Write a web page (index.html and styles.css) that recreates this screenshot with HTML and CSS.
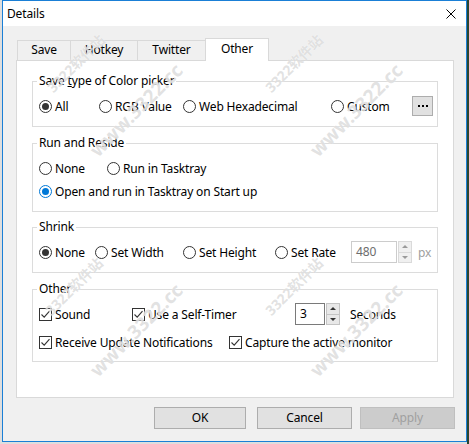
FILE: index.html
```html
<!DOCTYPE html>
<html>
<head>
<meta charset="utf-8">
<title>Details</title>
<link rel="stylesheet" href="styles.css">
</head>
<body>
<div class="window">
  <div class="titlebar">
    <span class="title">Details</span>
    <svg class="close" width="10" height="10" viewBox="0 0 10 10"><path d="M0.5 0.5 L9.5 9.5 M9.5 0.5 L0.5 9.5" stroke="#000" stroke-width="1" fill="none"/></svg>
  </div>
  <div class="client">
    <div class="tabs">
      <div class="tab t-save">Save</div>
      <div class="tab t-hotkey">Hotkey</div>
      <div class="tab t-twitter">Twitter</div>
      <div class="tab active t-other">Other</div>
    </div>
    <div class="panel">
      <fieldset class="group g1">
        <legend>Save <u>t</u>ype of Color picker</legend>
        <div class="row">
          <span class="opt w-all"><i class="radio on"></i>All</span>
          <span class="opt w-rgb"><i class="radio"></i>RGB Value</span>
          <span class="opt w-web"><i class="radio"></i>Web Hexadecimal</span>
          <span class="opt w-custom"><i class="radio"></i>Custom</span>
          <span class="dots"><b></b><b></b><b></b></span>
        </div>
      </fieldset>

      <fieldset class="group g2">
        <legend>Run and Reside</legend>
        <div class="row">
          <span class="opt w-none1"><i class="radio"></i>None</span>
          <span class="opt"><i class="radio"></i>Run in Tasktray</span>
        </div>
        <div class="row row-gap3">
          <span class="opt"><i class="radio on focus"></i>Open and run in Tasktray on Start up</span>
        </div>
      </fieldset>

      <fieldset class="group g3">
        <legend>Shrink</legend>
        <div class="row">
          <span class="opt w-none2"><i class="radio on"></i>None</span>
          <span class="opt w-width"><i class="radio"></i>Set Width</span>
          <span class="opt w-height"><i class="radio"></i>Set Height</span>
          <span class="opt w-rate"><i class="radio"></i>Set Rate</span>
          <span class="spin disabled">
            <span class="field f-rate">480</span>
            <span class="arrows"><span class="up"></span><span class="down"></span></span>
          </span>
          <span class="unit">px</span>
        </div>
      </fieldset>

      <fieldset class="group g4">
        <legend>Other</legend>
        <div class="row">
          <span class="opt w-sound"><i class="check"><svg width="11" height="11" viewBox="0 0 11 11"><path d="M1.5 5.5 L4.2 8.2 L9.5 2.2" stroke="#333" stroke-width="1.1" fill="none"/></svg></i>Sound</span>
          <span class="opt w-timer"><i class="check"><svg width="11" height="11" viewBox="0 0 11 11"><path d="M1.5 5.5 L4.2 8.2 L9.5 2.2" stroke="#333" stroke-width="1.1" fill="none"/></svg></i>Use a Self-Timer</span>
          <span class="spin">
            <span class="field f-sec">3</span>
            <span class="arrows"><span class="up"></span><span class="down"></span></span>
          </span>
          <span class="seconds">Seconds</span>
        </div>
        <div class="row row-gap8">
          <span class="opt w-receive"><i class="check"><svg width="11" height="11" viewBox="0 0 11 11"><path d="M1.5 5.5 L4.2 8.2 L9.5 2.2" stroke="#333" stroke-width="1.1" fill="none"/></svg></i>Receive Update Notifications</span>
          <span class="opt"><i class="check"><svg width="11" height="11" viewBox="0 0 11 11"><path d="M1.5 5.5 L4.2 8.2 L9.5 2.2" stroke="#333" stroke-width="1.1" fill="none"/></svg></i>Capture the active monitor</span>
        </div>
      </fieldset>
    </div>
    <div class="buttons">
      <span class="btn b-ok">OK</span>
      <span class="btn b-cancel">Cancel</span>
      <span class="btn b-apply disabled">Apply</span>
    </div>
  </div>

  <span class="wm wm-a1">3322软件站</span>
  <span class="wm wm-big wm-a2">www.3322.cc</span>
  <span class="wm wm-b1">3322软件站</span>
  <span class="wm wm-big wm-b2">www.3322.cc</span>
  <span class="wm wm-c1">3322软件站</span>
  <span class="wm wm-big wm-c2">www.3322.cc</span>
  <span class="wm wm-d1">3322软件站</span>
  <span class="wm wm-big wm-d2">www.3322.cc</span>
</div>
</body>
</html>
```
FILE: styles.css
```css
* { box-sizing: border-box; }
html, body { margin: 0; padding: 0; }
body {
  width: 469px;
  height: 444px;
  overflow: hidden;
  background: linear-gradient(to right, #dedede 467px, #2a4530 467px);
  font-family: "Noto Sans", "Liberation Sans", sans-serif;
  font-size: 12px;
  letter-spacing: -0.15px;
  color: #000;
}
.window {
  position: relative;
  margin-left: 2px;
  width: 465px;
  height: 442px;
  border: 1px solid #1a7fd6;
  background: #f0f0f0;
  overflow: hidden;
}
.titlebar {
  height: 25px;
  background: #fff;
  display: flex;
  align-items: center;
  justify-content: space-between;
  padding: 0 10px 0 4px;
}
.title { line-height: 16px; }
.close { display: block; }

.client { padding-top: 12px; }

.tabs {
  display: flex;
  align-items: flex-end;
  height: 22px;
  margin-left: 14px;
}
.tab {
  height: 20px;
  border: 1px solid #d9d9d9;
  border-bottom: none;
  background: #f0f0f0;
  text-align: center;
  line-height: 18px;
  margin-left: -1px;
}
.tab:first-child { margin-left: 0; }
.t-save { width: 54px; }
.t-hotkey { width: 68px; }
.t-twitter { width: 69px; }
.t-other { width: 64px; }
.tab.active {
  height: 23px;
  margin-bottom: -1px;
  background: #fff;
  position: relative;
  z-index: 1;
  line-height: 19px;
}

.panel {
  margin-left: 13px;
  width: 438px;
  height: 338px;
  border: 1px solid #d9d9d9;
  background: #fff;
  padding: 12px 15px 0;
}

.group {
  border: 1px solid #dcdcdc;
  margin: 0;
  padding: 0 0 10px;
  min-width: 0;
}
.group legend {
  margin-left: 4px;
  padding: 0 2px;
  line-height: 16px;
  height: 16px;
}
.g1 { padding-top: 7px; padding-bottom: 10px; }
.g2 { margin-top: 8px; padding-top: 7px; padding-bottom: 10px; }
.g3 { margin-top: 7px; padding-top: 7px; padding-bottom: 10px; }
.g4 { margin-top: 8px; padding-top: 7px; padding-bottom: 9px; }

.row {
  display: flex;
  align-items: center;
  height: 20px;
  padding-left: 6px;
  white-space: nowrap;
}
.row-gap3 { margin-top: 3px; }
.row-gap8 { margin-top: 8px; }

.opt {
  display: flex;
  align-items: center;
  flex: none;
}
.w-all { width: 60px; }
.w-rgb { width: 84px; }
.w-web { width: 148px; }
.w-custom { width: 81px; }
.w-none1 { width: 68px; }
.w-none2 { width: 56px; }
.w-width { width: 88px; }
.w-height { width: 92px; }
.w-rate { width: 76px; }
.w-sound { width: 93px; }
.w-timer { width: 163px; }
.w-receive { width: 190px; }

.radio {
  width: 13px;
  height: 13px;
  border: 1px solid #333;
  border-radius: 50%;
  margin-right: 3px;
  flex: none;
  display: flex;
  align-items: center;
  justify-content: center;
  background: #fff;
}
.radio.on::after {
  content: "";
  width: 7px;
  height: 7px;
  border-radius: 50%;
  background: #333;
}
.radio.focus { border-color: #0078d7; }
.radio.focus::after { background: #0078d7; }

.check {
  width: 13px;
  height: 13px;
  border: 1px solid #333;
  margin-right: 3px;
  flex: none;
  background: #fff;
}
.check svg { display: block; }

.dots {
  width: 21px;
  height: 20px;
  border: 1px solid #adadad;
  background: #e1e1e1;
  display: flex;
  align-items: center;
  justify-content: center;
  gap: 2px;
  flex: none;
}
.dots b {
  width: 2px;
  height: 2px;
  background: #000;
}

.spin {
  display: flex;
  align-items: center;
  flex: none;
  height: 22px;
}
.field {
  height: 22px;
  border: 1px solid #7a7a7a;
  background: #fff;
  padding-left: 4px;
  line-height: 20px;
}
.f-rate { width: 46px; }
.f-sec { width: 30px; }
.arrows {
  display: flex;
  flex-direction: column;
  margin-left: 1px;
  width: 14px;
  height: 22px;
}
.arrows span {
  flex: 1;
  border: 1px solid #c4c4c4;
  background: #e8e8e8;
  display: flex;
  align-items: center;
  justify-content: center;
}
.arrows span + span { border-top: none; }
.arrows .up::after {
  content: "";
  border-left: 3px solid transparent;
  border-right: 3px solid transparent;
  border-bottom: 3px solid #333;
}
.arrows .down::after {
  content: "";
  border-left: 3px solid transparent;
  border-right: 3px solid transparent;
  border-top: 3px solid #333;
}
.spin.disabled .field { border-color: #cccccc; color: #6d6d6d; }
.spin.disabled .arrows span { border-color: #dadada; background: #f0f0f0; }
.spin.disabled .arrows .up::after { border-bottom-color: #9a9a9a; }
.spin.disabled .arrows .down::after { border-top-color: #9a9a9a; }
.unit { margin-left: 6px; color: #a0a0a0; }
.seconds { margin-left: 10px; }

.buttons {
  display: flex;
  margin-top: 9px;
  padding-left: 151px;
}
.btn {
  height: 22px;
  border: 1px solid #adadad;
  background: #e1e1e1;
  text-align: center;
  line-height: 20px;
}
.b-ok { width: 92px; }
.b-cancel { width: 95px; margin-left: 11px; }
.b-apply { width: 95px; margin-left: 8px; }
.btn.disabled { background: #cccccc; border-color: #bfbfbf; color: #a0a0a0; }

.wm {
  position: absolute;
  z-index: 5;
  white-space: nowrap;
  font-family: "Noto Sans", "Noto Sans CJK SC", sans-serif;
  font-weight: bold;
  font-size: 14px;
  letter-spacing: 0;
  line-height: 20px;
  color: rgba(190, 190, 190, 0.45);
  text-shadow: 0 0 1px rgba(255, 255, 255, 0.9);
  transform: rotate(-45deg);
  transform-origin: 0 100%;
  pointer-events: none;
}
.wm-big { font-size: 19px; }
.wm-a1 { left: 54px; top: 76px; }
.wm-a2 { left: 97px; top: 139px; }
.wm-b1 { left: 272px; top: 76px; }
.wm-b2 { left: 317px; top: 139px; }
.wm-c1 { left: 52px; top: 299px; }
.wm-c2 { left: 97px; top: 359px; }
.wm-d1 { left: 272px; top: 299px; }
.wm-d2 { left: 317px; top: 359px; }
```
